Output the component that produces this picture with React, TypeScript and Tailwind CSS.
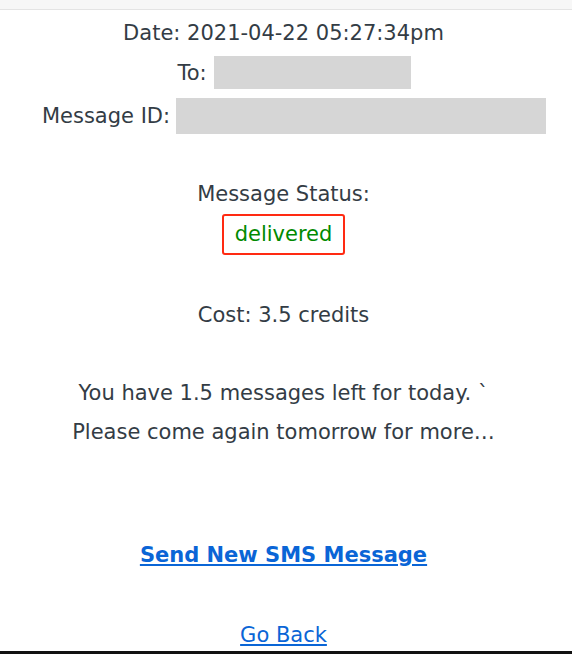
import React from 'react';

const font = { fontFamily: '"DejaVu Sans", Verdana, sans-serif' };

export default function App() {
  return (
    <div className="flex h-[654px] w-full flex-col bg-white text-[21px] leading-[24px] text-[#333c45]" style={font}>
      {/* top strip */}
      <div className="h-[10px] shrink-0 border-b border-[#e4e4e4] bg-[#f7f7f7]" />

      <div className="flex flex-1 flex-col items-center pr-[5px] text-center">
        <div className="mt-[11px]">Date: 2021-04-22 05:27:34pm</div>

        <div className="ml-[21px] mt-[11px] flex h-[33px] items-center">
          <span>To:</span>
          <span className="ml-[7px] h-[33px] w-[197px] bg-[#d6d6d6]" />
        </div>

        <div className="ml-[21px] mt-[9px] flex h-[36px] items-center">
          <span>Message ID:</span>
          <span className="ml-[6px] h-[36px] w-[370px] bg-[#d6d6d6]" />
        </div>

        <div className="mt-[48px]">Message Status:</div>
        <div className="mt-[8px] w-[123px] rounded-[3px] border-2 border-[#ff2a12] pb-[7px] pt-[6px] text-[#008a00]">
          delivered
        </div>

        <div className="mt-[48px]">Cost: 3.5 credits</div>

        <div className="mt-[54px]">You have 1.5 messages left for today. `</div>
        <div className="mt-[15px]">Please come again tomorrow for more…</div>

        <a href="#" className="mt-[99px] font-bold text-[#0a65d6] underline">
          Send New SMS Message
        </a>

        <a href="#" className="mt-[56px] text-[#0a65d6] underline">
          Go Back
        </a>
      </div>

      <div className="h-[3px] shrink-0 bg-[#111]" />
    </div>
  );
}
